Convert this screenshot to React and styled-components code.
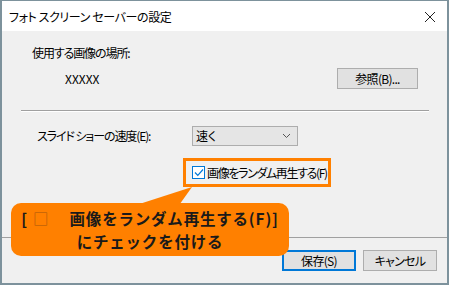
import React from "react";
import styled, { createGlobalStyle } from "styled-components";

const Global = createGlobalStyle`
  *, *::before, *::after { box-sizing: border-box; }
  html, body { margin: 0; padding: 0; background: #ffffff; }
  body { font-family: "Noto Sans CJK JP", "Noto Sans", sans-serif; }
`;

const Window = styled.div`
  position: relative;
  width: 449px;
  height: 285px;
  border: 2px solid #7d929c;
  border-top-width: 1px;
  background: #f0f0f0;
  display: flex;
  flex-direction: column;
  font-size: 12px;
  line-height: 16px;
  color: #000;
  font-feature-settings: "palt" 1;
  letter-spacing: -1.1px;
`;

const TitleBar = styled.div`
  flex: none;
  height: 30px;
  background: #ffffff;
  display: flex;
  align-items: center;
  justify-content: space-between;
  padding: 0 8px 0 7px;
`;

const Title = styled.span`
  margin-top: 2px;
  letter-spacing: -0.4px;
`;

const CloseIcon = styled.svg`
  width: 12px;
  height: 12px;
  margin-right: 3px;
  margin-top: 2px;
`;

const Content = styled.div`
  flex: none;
  height: 206px;
  display: flex;
  flex-direction: column;
  padding: 14px 18px 0 17px;
`;

const Label = styled.div`
  padding-left: ${(p) => p.$indent || 0}px;
`;

const PathRow = styled.div`
  margin-top: 7px;
  height: 21px;
  display: flex;
  align-items: center;
  justify-content: space-between;
  padding-left: 46px;
  padding-right: 11px;
`;

const PathValue = styled.span`
  letter-spacing: 0;
`;

const Button = styled.button`
  width: ${(p) => p.$w}px;
  height: 21px;
  background: #e1e1e1;
  border: 1px solid ${(p) => (p.$default ? "#0078d7" : "#adadad")};
  box-shadow: ${(p) => (p.$default ? "inset 0 0 0 1px #0078d7" : "none")};
  font-family: inherit;
  font-size: 12px;
  line-height: 16px;
  font-feature-settings: "palt" 1;
  letter-spacing: -0.7px;
  padding: 0;
  color: #000;
`;

const Separator = styled.div`
  margin-top: 21px;
  margin-left: 2px;
  height: 2px;
  background: #a0a0a0;
  border-bottom: 1px solid #ffffff;
`;

const SpeedRow = styled.div`
  margin-top: 14px;
  height: 20px;
  display: flex;
  align-items: center;
  padding-left: 18px;
`;

const SpeedLabel = styled.span`
  width: 155px;
`;

const Select = styled.div`
  width: 106px;
  height: 20px;
  background: #e5e5e5;
  border: 1px solid #adadad;
  display: flex;
  align-items: center;
  justify-content: space-between;
  padding: 0 6px 0 3px;
  letter-spacing: 0;
`;

const CheckHighlight = styled.div`
  align-self: flex-start;
  margin-top: 12px;
  margin-left: 164px;
  width: 148px;
  height: 29px;
  border: 3px solid #ff8000;
  display: flex;
  align-items: center;
  padding-left: 6px;
  gap: 1px;
  white-space: nowrap;
`;

const CheckBox = styled.span`
  flex: none;
  width: 13px;
  height: 13px;
  border: 1px solid #0078d7;
  background: #fff;
  display: flex;
  align-items: center;
  justify-content: center;
`;

const CheckText = styled.span`
  margin-left: 1px;
  letter-spacing: -1.35px;
`;

const Footer = styled.div`
  flex: none;
  height: 46px;
  border-top: 1px solid #a0a0a0;
  display: flex;
  justify-content: flex-end;
  align-items: flex-start;
  padding: 12px 10px 0 0;
  gap: 7px;
`;

const Callout = styled.div`
  position: absolute;
  left: 9px;
  top: 202px;
  width: 278px;
  height: 53px;
  background: #ff8000;
  border-radius: 10px;
  display: flex;
  flex-direction: column;
  align-items: center;
  justify-content: center;
  font-weight: 700;
  font-size: 15.5px;
  line-height: 22.5px;
  color: #1a1a1a;
  font-feature-settings: normal;
  letter-spacing: 0.8px;
`;

const Pointer = styled.svg`
  position: absolute;
  left: 100px;
  top: 183px;
  width: 92px;
  height: 24px;
`;

const CalloutLine = styled.div`
  white-space: pre;
`;

const Box = styled.span`
  color: #a8560c;
  font-weight: 400;
  margin: 0 4px 0 5px;
`;

export default function App() {
  return (
    <>
      <Global />
      <Window>
        <TitleBar>
          <Title>フォト スクリーン セーバーの設定</Title>
          <CloseIcon viewBox="0 0 12 12">
            <path d="M1 1 L11 11 M11 1 L1 11" stroke="#222" strokeWidth="1" fill="none" />
          </CloseIcon>
        </TitleBar>
        <Content>
          <Label $indent={13}>使用する画像の場所:</Label>
          <PathRow>
            <PathValue>XXXXX</PathValue>
            <Button $w={81}>参照(B)...</Button>
          </PathRow>
          <Separator />
          <SpeedRow>
            <SpeedLabel>スライド ショーの速度(E):</SpeedLabel>
            <Select>
              <span>速く</span>
              <svg width="9" height="6" viewBox="0 0 9 6">
                <path d="M1 1 L4.5 4.5 L8 1" stroke="#555" strokeWidth="1" fill="none" />
              </svg>
            </Select>
          </SpeedRow>
          <CheckHighlight>
            <CheckBox>
              <svg width="10" height="9" viewBox="0 0 10 9">
                <path d="M1 4.5 L3.8 7.3 L9 1.5" stroke="#0078d7" strokeWidth="1.2" fill="none" />
              </svg>
            </CheckBox>
            <CheckText>画像をランダム再生する(F)</CheckText>
          </CheckHighlight>
        </Content>
        <Footer>
          <Button $w={74} $default>保存(S)</Button>
          <Button $w={74}>キャンセル</Button>
        </Footer>
        <Pointer viewBox="0 0 92 24">
          <polygon points="90,3 25,24 75,24" fill="#ff8000" />
        </Pointer>
        <Callout>
          <CalloutLine>
            [<Box>□</Box>　画像をランダム再生する(F)]
          </CalloutLine>
          <CalloutLine>にチェックを付ける</CalloutLine>
        </Callout>
      </Window>
    </>
  );
}
